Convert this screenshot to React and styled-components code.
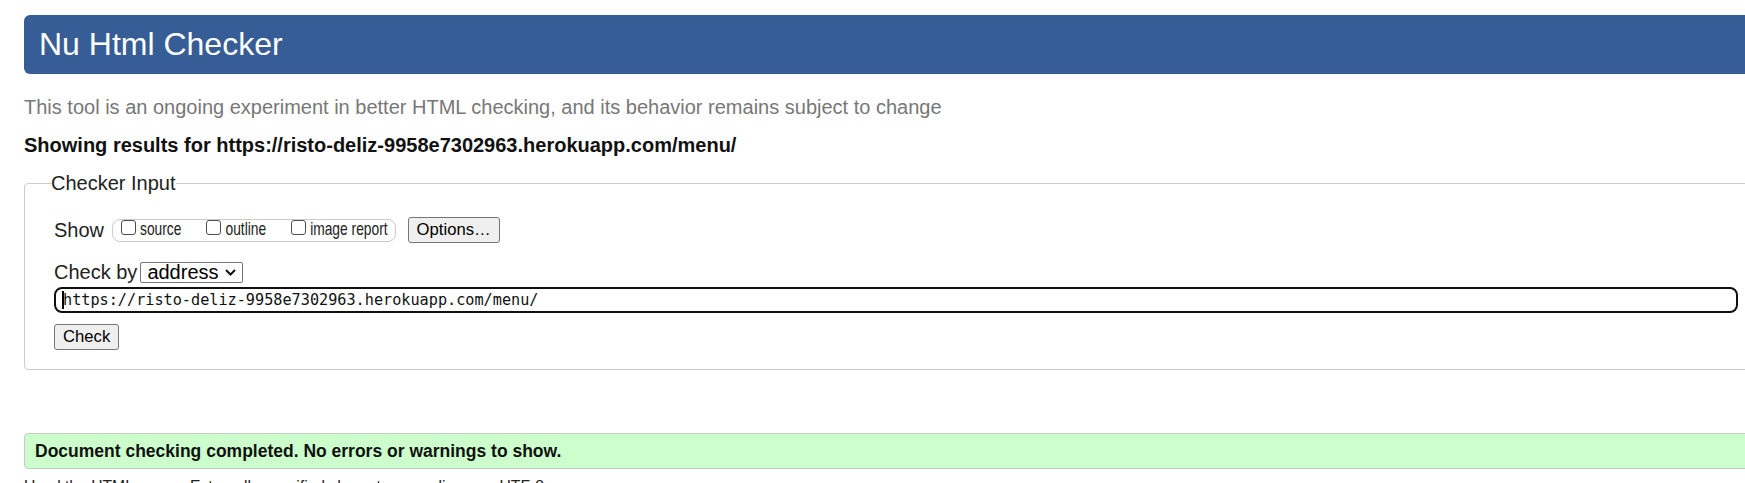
import styled, { createGlobalStyle } from 'styled-components';

const GlobalStyle = createGlobalStyle`
  html, body {
    margin: 0;
    padding: 0;
    background: #fff;
    overflow: hidden;
  }
  body {
    font-family: 'Liberation Sans', Arial, sans-serif;
    color: #222;
  }
`;

const Page = styled.div`
  width: 1744px;
  padding: 15px 0 0 24px;
`;

const Header = styled.h1`
  margin: 0;
  height: 59px;
  padding-left: 15px;
  background: #365d95;
  border-radius: 6px;
  color: #fff;
  font-weight: 400;
  font-size: 32px;
  line-height: 59px;
`;

const Tagline = styled.p`
  margin: 22px 0 0;
  font-size: 20px;
  line-height: 23px;
  color: #777;
`;

const ResultsFor = styled.p`
  margin: 15px 0 0;
  font-size: 20px;
  line-height: 23px;
  font-weight: 700;
  color: #111;
`;

const Fieldset = styled.fieldset`
  margin: 15px 0 0;
  padding: 22px 29px 19px;
  border: 1px solid #ccc;
  border-radius: 4px;
  min-width: 0;
`;

const Legend = styled.legend`
  padding: 0;
  margin-left: -3px;
  font-size: 20px;
  line-height: 23px;
  color: #222;
`;

const Row = styled.div`
  display: flex;
  align-items: center;
  height: ${(p) => p.h}px;
  margin-top: ${(p) => p.mt || 0}px;
`;

const RowLabel = styled.span`
  font-size: 20px;
  line-height: 23px;
  margin-right: ${(p) => p.gap}px;
`;

const OptionGroup = styled.div`
  display: flex;
  align-items: center;
  gap: 25px;
  height: 21px;
  padding: 0 7px 0 8px;
  border: 1px solid #ccc;
  border-radius: 8px;
`;

const Option = styled.label`
  display: flex;
  align-items: center;
`;

const Checkbox = styled.input.attrs({ type: 'checkbox' })`
  appearance: none;
  width: 15px;
  height: 15px;
  margin: 0 4px 6px 0;
  border: 1px solid #4d4d4d;
  border-radius: 3px;
  background: #fff;
  box-sizing: border-box;
`;

// the labels in the reference use a condensed face: keep the narrow advance, stretch the height
const OptionText = styled.span`
  display: inline-block;
  font-size: 13.8px;
  line-height: 16px;
  color: #222;
  transform: scaleY(1.3);
  transform-origin: 50% 60%;
`;

const Button = styled.button`
  height: 26px;
  margin-left: ${(p) => p.ml || 0}px;
  padding: 0 8px;
  font-family: 'Liberation Sans', Arial, sans-serif;
  font-size: 16.67px;
  color: #000;
  background: #efefef;
  border: 1px solid #767676;
  border-radius: 3px;
`;

const SelectBox = styled.div`
  display: flex;
  align-items: center;
  justify-content: space-between;
  box-sizing: border-box;
  width: 103px;
  height: 21px;
  padding: 0 6px;
  border: 1px solid #767676;
  border-radius: 2px;
  font-size: 20px;
  color: #000;
`;

const UrlField = styled.div`
  display: flex;
  align-items: center;
  box-sizing: border-box;
  height: 26px;
  margin-top: 4px;
  padding-left: 6px;
  border: 2px solid #101010;
  border-radius: 8px;
  font-family: 'DejaVu Sans Mono', 'Liberation Mono', monospace;
  font-size: 15.2px;
  color: #111;
  white-space: nowrap;
`;

const Caret = styled.span`
  width: 2px;
  height: 18px;
  margin-right: -1px;
  background: #000;
`;

const CheckButtonRow = styled.div`
  margin-top: 11px;
`;

const Status = styled.div`
  box-sizing: border-box;
  height: 36px;
  margin-top: 63px;
  padding-left: 10px;
  border: 1px solid #c8c8c8;
  border-radius: 4px;
  background: #ccffcc;
  font-size: 17.5px;
  font-weight: 700;
  line-height: 34px;
  color: #111;
`;

const Stats = styled.p`
  margin: 9px 0 0;
  font-size: 15.7px;
  line-height: 18px;
  color: #222;
`;

const Chevron = () => (
  <svg width="11" height="7" viewBox="0 0 11 7">
    <path d="M1 1 L5.5 5.5 L10 1" fill="none" stroke="#111" strokeWidth="2" />
  </svg>
);

const url = 'https://risto-deliz-9958e7302963.herokuapp.com/menu/';

const App = () => {
  return (
    <>
      <GlobalStyle />
      <Page>
        <Header>Nu Html Checker</Header>
        <Tagline>
          This tool is an ongoing experiment in better HTML checking, and its behavior remains
          subject to change
        </Tagline>
        <ResultsFor>Showing results for {url}</ResultsFor>
        <Fieldset>
          <Legend>Checker Input</Legend>
          <Row h={26}>
            <RowLabel gap={8}>Show</RowLabel>
            <OptionGroup>
              {['source', 'outline', 'image report'].map((name) => (
                <Option key={name}>
                  <Checkbox />
                  <OptionText>{name}</OptionText>
                </Option>
              ))}
            </OptionGroup>
            <Button ml={12}>Options…</Button>
          </Row>
          <Row h={21} mt={19}>
            <RowLabel gap={3}>Check by</RowLabel>
            <SelectBox>
              <span>address</span>
              <Chevron />
            </SelectBox>
          </Row>
          <UrlField>
            <Caret />
            {url}
          </UrlField>
          <CheckButtonRow>
            <Button>Check</Button>
          </CheckButtonRow>
        </Fieldset>
        <Status>Document checking completed. No errors or warnings to show.</Status>
        <Stats>Used the HTML parser. Externally specified character encoding was UTF-8.</Stats>
      </Page>
    </>
  );
};

export default App;
